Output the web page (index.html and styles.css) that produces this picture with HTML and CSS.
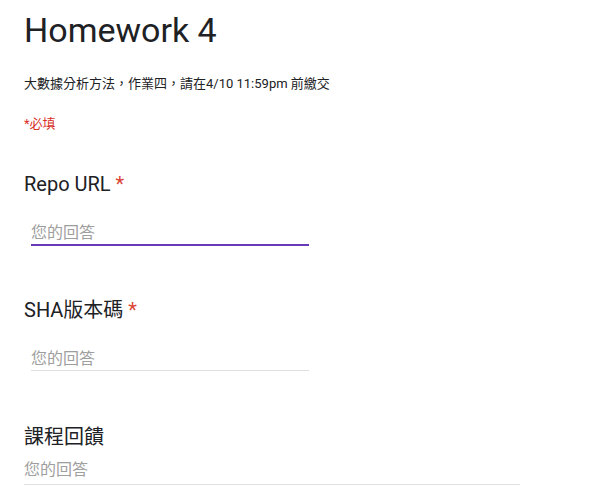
FILE: index.html
```html
<!DOCTYPE html>
<html lang="zh-Hant">
<head>
<meta charset="utf-8">
<link rel="stylesheet" href="styles.css">
</head>
<body>
<main class="form">
  <header class="form-header">
    <h1 class="form-title">Homework 4</h1>
    <p class="form-desc">大數據分析方法，作業四，請在4/10 11:59pm 前繳交</p>
    <p class="form-required">*必填</p>
  </header>
  <div class="questions">
    <section class="question">
      <div class="q-label">Repo URL <span class="q-star">*</span></div>
      <div class="q-input q-input-focused"><span class="q-placeholder">您的回答</span></div>
    </section>
    <section class="question">
      <div class="q-label">SHA版本碼 <span class="q-star">*</span></div>
      <div class="q-input"><span class="q-placeholder">您的回答</span></div>
    </section>
    <section class="question question-long">
      <div class="q-label">課程回饋</div>
      <div class="q-input q-input-long"><span class="q-placeholder">您的回答</span></div>
    </section>
  </div>
</main>
</body>
</html>
```

FILE: styles.css
```css
html, body {
  margin: 0;
  padding: 0;
  background: #ffffff;
}
body {
  font-family: Roboto, "Noto Sans CJK TC", sans-serif;
  color: rgba(0, 0, 0, 0.87);
}
.form {
  padding: 8px 24px 0 24px;
}
.form-header {
  display: flex;
  flex-direction: column;
}
.form-title {
  margin: 0;
  font-size: 34px;
  font-weight: 400;
  line-height: 44px;
  color: #202124;
}
.form-desc {
  margin: 22px 0 0 0;
  font-size: 13px;
  line-height: 20px;
  color: #202124;
}
.form-required {
  margin: 20px 0 0 0;
  font-size: 13px;
  line-height: 20px;
  color: #d93025;
}
.questions {
  display: flex;
  flex-direction: column;
  gap: 50px;
  margin-top: 36px;
}
.question {
  display: flex;
  flex-direction: column;
}
.q-label {
  font-size: 20px;
  line-height: 28px;
  color: #202124;
}
.q-star {
  color: #db4437;
}
.q-input {
  margin: 24px 0 0 7px;
  width: 278px;
  height: 22px;
  line-height: 22px;
  border-bottom: 1px solid #e0e0e0;
  display: flex;
  align-items: center;
}
.q-input-focused {
  border-bottom: 2px solid #673ab7;
}
.q-placeholder {
  font-size: 16px;
  color: #9e9e9e;
}
.question-long {
  margin-top: 2px;
}
.question-long .q-input-long {
  margin: 7px 0 0 0;
  width: 496px;
  height: 24px;
  line-height: 24px;
  padding-bottom: 2px;
}
```
